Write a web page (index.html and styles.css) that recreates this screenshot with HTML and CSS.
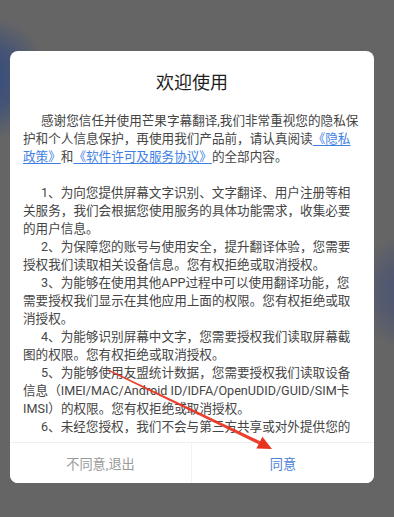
FILE: index.html
```html
<!DOCTYPE html>
<html lang="zh-CN">
<head>
<meta charset="utf-8">
<title>欢迎使用</title>
<link rel="stylesheet" href="styles.css">
</head>
<body>
<div class="dialog">
  <h1 class="title">欢迎使用</h1>
  <div class="content">
    <p class="para">感谢您信任并使用芒果字幕翻译,我们非常重视您的隐私保护和个人信息保护，再使用我们产品前，请认真阅读<a class="link" href="#">《隐私政策》</a>和<a class="link" href="#">《软件许可及服务协议》</a>的全部内容。</p>
    <p class="para blank"></p>
    <p class="para">1、为向您提供屏幕文字识别、文字翻译、用户注册等相关服务，我们会根据您使用服务的具体功能需求，收集必要的用户信息。</p>
    <p class="para">2、为保障您的账号与使用安全，提升翻译体验，您需要授权我们读取相关设备信息。您有权拒绝或取消授权。</p>
    <p class="para">3、为能够在使用其他APP过程中可以使用翻译功能，您需要授权我们显示在其他应用上面的权限。您有权拒绝或取消授权。</p>
    <p class="para">4、为能够识别屏幕中文字，您需要授权我们读取屏幕截图的权限。您有权拒绝或取消授权。</p>
    <p class="para">5、为能够使用友盟统计数据，您需要授权我们读取设备信息（IMEI/MAC/Android ID/IDFA/OpenUDID/GUID/SIM卡IMSI）的权限。您有权拒绝或取消授权。</p>
    <p class="para">6、未经您授权，我们不会与第三方共享或对外提供您的信息。</p>
  </div>
  <div class="buttons">
    <button class="btn btn-cancel">不同意,退出</button>
    <button class="btn btn-ok">同意</button>
  </div>
</div>
<svg class="arrow" width="394" height="517" viewBox="0 0 394 517" xmlns="http://www.w3.org/2000/svg">
  <polygon points="108,369.3 108,370.7 259.2,444.6 260.2,441.2" fill="#e8321f" opacity="0.92"/>
  <polygon points="272,449 256.4,448.6 262.4,436.8" fill="#e8321f"/>
</svg>
</body>
</html>
```

FILE: styles.css
```css
html, body {
  margin: 0;
  padding: 0;
}

body {
  width: 394px;
  height: 517px;
  overflow: hidden;
  position: relative;
  font-family: Roboto, "Noto Sans CJK SC", sans-serif;
  background:
    radial-gradient(circle at -14px 78px, rgba(52, 76, 128, 0.95) 0, rgba(58, 78, 122, 0.75) 32px, rgba(101, 101, 101, 0) 62px),
    radial-gradient(circle at 412px 292px, rgba(72, 82, 118, 0.95) 0, rgba(76, 84, 114, 0.7) 30px, rgba(101, 101, 101, 0) 58px),
    #656565;
}

.dialog {
  margin: 51px 20px 0 10px;
  height: 432px;
  background: #fff;
  border-radius: 8px;
  display: flex;
  flex-direction: column;
  overflow: hidden;
}

.title {
  margin: 0;
  padding-top: 20px;
  font-size: 18px;
  line-height: 24px;
  font-weight: 400;
  color: #1e1e1e;
  text-align: center;
}

.content {
  flex: 1;
  margin: 17px 0 4px;
  padding: 0 13px;
  overflow: hidden;
}

.para {
  margin: 0;
  font-size: 12.6px;
  line-height: 18px;
  color: #454545;
  text-indent: 18px;
  width: 338px;
}

.blank {
  height: 18px;
}

.link {
  color: #3f7fe3;
  text-decoration: underline;
  text-underline-offset: 2px;
}

.buttons {
  display: grid;
  grid-template-columns: 1fr 1fr;
  border-top: 1px solid #efefef;
  height: 40px;
}

.btn {
  border: 0;
  background: #fff;
  font-family: Roboto, "Noto Sans CJK SC", sans-serif;
  font-size: 13.2px;
  padding: 0;
  margin: 0;
}

.btn-cancel {
  color: #9a9a9a;
  border-right: 1px solid #f2f2f2;
}

.btn-ok {
  color: #4b82d6;
}

.arrow {
  position: absolute;
  left: 0;
  top: 0;
  pointer-events: none;
}
```
